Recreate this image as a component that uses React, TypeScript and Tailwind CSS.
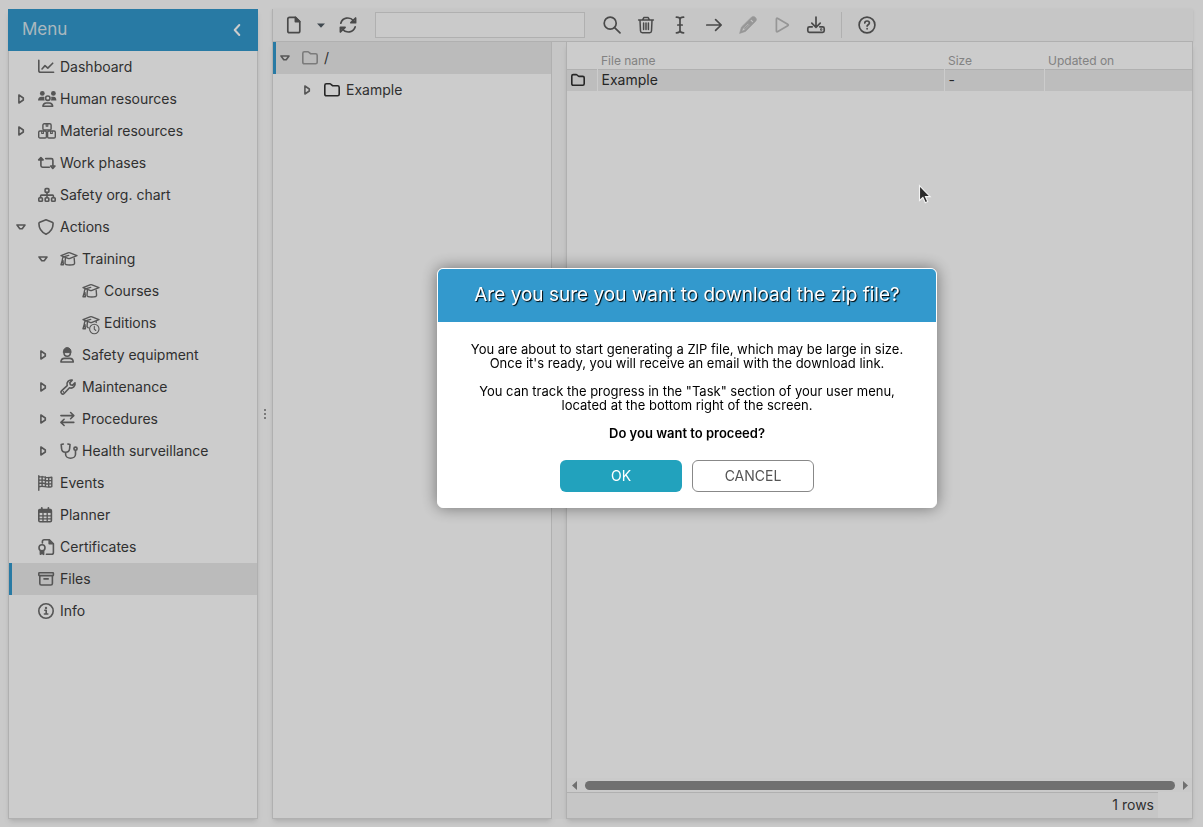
import React, { useState } from "react";
import type { ReactNode } from "react";

type IconProps = { children: ReactNode; w?: number; h?: number; sw?: number; className?: string };

function Icon({ children, w = 18, h = 16, sw = 1.6, className = "" }: IconProps) {
  return (
    <svg
      width={w}
      height={h}
      viewBox={`0 0 ${w} ${h}`}
      fill="none"
      stroke="currentColor"
      strokeWidth={sw}
      strokeLinecap="round"
      strokeLinejoin="round"
      aria-hidden="true"
      className={`shrink-0 overflow-visible ${className}`}
    >
      {children}
    </svg>
  );
}

const ChartIcon = () => (
  <Icon>
    <path d="M.8 1.2v10.3q0 1.8 1.8 1.8h13" />
    <path d="M4 10l3-3.4 2.8 2.5 4.9-4.9" />
  </Icon>
);

const PeopleIcon = () => (
  <Icon>
    <g fill="currentColor" stroke="none">
      <circle cx="4.3" cy="2.4" r="2.4" />
      <circle cx="15.4" cy="2.4" r="2.4" />
      <path d="M0 9.5C0 7 1.4 5.7 3.2 5.7h2.3c.4 0 .8.1 1 .2-.5 1.2-.3 2.6.3 3.6zM18.4 9.5c0-2.5-.9-3.8-2.7-3.8h-1.6c-.4 0-.8.1-1 .2.5 1.2.3 2.6-.3 3.6z" />
    </g>
    <circle cx="9.8" cy="7.2" r="2.2" />
    <path d="M4.9 15.2c.3-2 1.6-3.2 3.3-3.2h3.2c1.7 0 3 1.2 3.3 3.2z" />
  </Icon>
);

const BoxesIcon = () => (
  <Icon sw={1.4}>
    <rect x="4.9" y=".8" width="8.2" height="6.2" rx="1.3" />
    <rect x=".7" y="8" width="7.7" height="7" rx="1.3" />
    <rect x="9.6" y="8" width="7.7" height="7" rx="1.3" />
    <path d="M8.2 1v2.2h1.6V1M3.7 8.2v2.3h1.7V8.2M12.6 8.2v2.3h1.7V8.2" strokeWidth="1.1" />
  </Icon>
);

const PhasesIcon = () => (
  <Icon>
    <path d="M.7 4.9l2.2-2.4 2.2 2.4zM2.9 5v5.6q0 1.6 1.6 1.6h6.8M7.7 3.6h5.6q1.6 0 1.6 1.6v5.4M12.6 11l2.2 2.4L17 11z" />
  </Icon>
);

const OrgIcon = () => (
  <Icon>
    <rect x="7.1" y="1.6" width="3.8" height="3.8" rx=".9" />
    <rect x=".8" y="10.7" width="3.6" height="3.6" rx=".9" />
    <rect x="7.2" y="10.7" width="3.6" height="3.6" rx=".9" />
    <rect x="13.6" y="10.7" width="3.6" height="3.6" rx=".9" />
    <path d="M9 5.4v5.3M2.6 10.5V8.9q0-.8.8-.8h11.2q.8 0 .8.8v1.6" />
  </Icon>
);

const ShieldIcon = () => (
  <Icon>
    <path d="M8 .8l6.2 2.4q.9.4.9 1.4c0 4.8-2.5 8.6-7.1 10.7C3.4 13.2.9 9.4.9 4.6q0-1 .9-1.4z" />
  </Icon>
);

const CapPaths = () => (
  <>
    <path d="M1 4.6l7-2.8q1-.4 2 0l7 2.8-7 2.8q-1 .4-2 0z" />
    <path d="M8.7 4.4L4.2 5.7q-1.7.5-1.8 2.4l-.3 3.5M2.4 9L1 13.8h2.4l-.5-4.4" />
  </>
);

const CapIcon = () => (
  <Icon sw={1.4}>
    <CapPaths />
    <path d="M5.4 7.2l-.4 5c0 2.4 9.6 2.4 9.6 0l-.4-5" />
  </Icon>
);

const CapClockIcon = () => (
  <Icon sw={1.4}>
    <CapPaths />
    <path d="M5.4 7.2l-.4 4.6 1.2 1M14.2 6.6v1" />
    <circle cx="12.3" cy="14" r="4.7" strokeWidth="1.1" />
    <path d="M12.3 11.4v2.8l1.5 1.3" strokeWidth="1.1" />
  </Icon>
);

const HelmetIcon = () => (
  <Icon>
    <path d="M3.3 5.2C3.3 2.5 4.6.8 7.2.5c2.6.3 3.9 2 3.9 4.7z" fill="currentColor" strokeWidth="1" />
    <path d="M4 5.8c0 4.6 6.4 4.6 6.4 0M.9 15c.2-2.3 1.6-3.6 3.6-3.6h5.2c2 0 3.4 1.3 3.6 3.6z" />
  </Icon>
);

const WrenchIcon = () => (
  <Icon>
    <path d="M12.2 1.1a4.2 4.2 0 0 0-5 5.5l-5.7 5.3a1.8 1.8 0 0 0 2.6 2.6l5.4-5.7a4.2 4.2 0 0 0 5.5-5l-2.6 2.5-2-.6-.6-2z" />
    <circle cx="3.2" cy="12.9" r=".3" strokeWidth="1" />
  </Icon>
);

const ProceduresIcon = () => (
  <Icon>
    <path d="M.9 4.6h12.8M10.6 1.5l3.2 3.1-3.2 3.1M13.8 11.4H1M4.1 8.3L.9 11.4l3.2 3.1" />
  </Icon>
);

const StethoscopeIcon = () => (
  <Icon>
    <path d="M3.3 1L1.2 1.6l.4 4.2c.3 4.6 7.6 4.6 8 0l.4-4.2L7.9 1M5.6 9.3v1.9c0 5.3 9.9 5.3 9.9 0V7.6" />
    <circle cx="15.5" cy="5.7" r="1.6" />
  </Icon>
);

const FlagIcon = () => (
  <Icon sw={1.4}>
    <path d="M.8.8v14.4M.8 2.2c4.6-2 6.8 1.7 13 0v9.4c-6.2 1.9-8.4-1.8-13 .2M.8 5.4c4.6-2 6.8 1.7 13 0M.8 8.6c4.6-2 6.8 1.7 13 0M4.1 1.4v9.4M7.4 2v9.6M10.7 2.5v9.6" />
  </Icon>
);

const CalendarIcon = () => (
  <Icon>
    <rect x=".8" y="2.6" width="12.6" height="12.2" rx="1.2" />
    <path d="M1 3h12.2v2.4H1z" fill="currentColor" strokeWidth="1" />
    <path d="M3.8 1v2M10.4 1v2" strokeWidth="1.8" />
    <path d="M1 8.8h12M1 11.8h12M5 6v8.6M9.2 6v8.6" strokeWidth="1.3" />
  </Icon>
);

const CertificateIcon = () => (
  <Icon>
    <path d="M4.4 4V2.6q0-1.8 1.8-1.8h5.2l4 4v8.6q0 1.8-1.8 1.8H8.4" />
    <path d="M11.2 1v3.8h4" fill="currentColor" />
    <circle cx="4" cy="8.8" r="3" />
    <path d="M2.4 11.9v3.4L4 14.4l1.6.9v-3.4" fill="currentColor" />
  </Icon>
);

const ArchiveIcon = () => (
  <Icon>
    <rect x=".8" y="1.8" width="14.6" height="2.8" rx=".6" />
    <path d="M1.8 4.8v7.6q0 1.6 1.6 1.6h9.4q1.6 0 1.6-1.6V4.8M6 7.9h4.2" />
  </Icon>
);

const InfoIcon = () => (
  <Icon>
    <circle cx="8" cy="8" r="7.2" />
    <path d="M6.8 7.3h1.4v3.6M6.4 11h3.4" />
    <circle cx="8" cy="4.9" r=".4" fill="currentColor" />
  </Icon>
);

const FolderIcon = ({ className = "", w = 18 }: { className?: string; w?: number }) => (
  <Icon w={w} className={className}>
    {w === 18 ? (
      <path d="M.8 12.2V3.4q0-1.6 1.6-1.6h3.4q.7 0 1.2.5l1.2 1.1q.4.4 1 .4h4.4q1.6 0 1.6 1.6v6.8q0 1.6-1.6 1.6H2.4q-1.6 0-1.6-1.6z" />
    ) : (
      <path d="M.8 11.8V4q0-1.4 1.4-1.4h2.9q.6 0 1 .4l1.1 1q.4.4.9.4h3.7q1.4 0 1.4 1.4v6q0 1.4-1.4 1.4H2.2q-1.4 0-1.4-1.4z" />
    )}
  </Icon>
);

const Caret = ({ open }: { open: boolean }) => (
  <Icon w={10} h={10} sw={1.6}>
    {open ? <path d="M1 3h8L6.2 6.8H3.8z" /> : <path d="M2.9 1v8l4.4-3V4z" />}
  </Icon>
);

type Item = { label: string; level: number; icon: ReactNode; open?: boolean };

const items: Item[] = [
  { label: "Dashboard", level: 0, icon: <ChartIcon /> },
  { label: "Human resources", level: 0, icon: <PeopleIcon />, open: false },
  { label: "Material resources", level: 0, icon: <BoxesIcon />, open: false },
  { label: "Work phases", level: 0, icon: <PhasesIcon /> },
  { label: "Safety org. chart", level: 0, icon: <OrgIcon /> },
  { label: "Actions", level: 0, icon: <ShieldIcon />, open: true },
  { label: "Training", level: 1, icon: <CapIcon />, open: true },
  { label: "Courses", level: 2, icon: <CapIcon /> },
  { label: "Editions", level: 2, icon: <CapClockIcon /> },
  { label: "Safety equipment", level: 1, icon: <HelmetIcon />, open: false },
  { label: "Maintenance", level: 1, icon: <WrenchIcon />, open: false },
  { label: "Procedures", level: 1, icon: <ProceduresIcon />, open: false },
  { label: "Health surveillance", level: 1, icon: <StethoscopeIcon />, open: false },
  { label: "Events", level: 0, icon: <FlagIcon /> },
  { label: "Planner", level: 0, icon: <CalendarIcon /> },
  { label: "Certificates", level: 0, icon: <CertificateIcon /> },
  { label: "Files", level: 0, icon: <ArchiveIcon /> },
  { label: "Info", level: 0, icon: <InfoIcon /> },
];

const indents = ["pl-1", "pl-[26px]", "pl-12"];

function Sidebar() {
  const [active, setActive] = useState("Files");
  return (
    <aside className="flex w-[250px] shrink-0 flex-col bg-white shadow-md">
      <header className="flex h-[42px] shrink-0 items-center justify-between bg-[#3399cd] pr-[11px] pl-3.5">
        <h2 className="text-[17px] text-[#d6e6ef]">Menu</h2>
        <button aria-label="Collapse menu" className="flex h-6 w-5 items-center justify-center text-white">
          <Icon w={8} h={12} sw={2}>
            <path d="M6.3 1L1.7 6l4.6 5" />
          </Icon>
        </button>
      </header>
      <nav className="flex-1 border-x border-b border-[#dddddd]">
        <ul>
          {items.map((it) => (
            <li key={it.label}>
              <a
                href="#"
                onClick={() => setActive(it.label)}
                className={`flex h-8 items-center border-l-[3px] text-sm text-[#3c3c3c] ${indents[it.level]} ${
                  active === it.label ? "border-[#3399cd] bg-[#eaeaea]" : "border-transparent"
                }`}
              >
                <span className="flex w-[22px] shrink-0 text-[#6c6c6c]">
                  {it.open !== undefined && <Caret open={it.open} />}
                </span>
                <span className="mr-1 flex w-[18px] shrink-0 text-[#6c6c6c]">{it.icon}</span>
                {it.label}
              </a>
            </li>
          ))}
        </ul>
      </nav>
    </aside>
  );
}

function Tool({ label, disabled = false, children }: { label: string; disabled?: boolean; children: ReactNode }) {
  return (
    <button
      aria-label={label}
      disabled={disabled}
      className="flex h-8 w-[34px] shrink-0 items-center justify-center text-[#5c5c5c] disabled:text-[#bcbcbc]"
    >
      <Icon w={18} h={18} sw={1.7}>
        {children}
      </Icon>
    </button>
  );
}

function Toolbar() {
  return (
    <div className="flex h-[33px] shrink-0 items-center border-b border-l border-[#dddddd] bg-[#f8f8f8] pl-1 shadow-sm">
      <Tool label="New file">
        <path d="M4.6 1.3h5.8l4.4 4.4v9.2q0 1.8-1.8 1.8H4.6q-1.8 0-1.8-1.8V3.1q0-1.8 1.8-1.8z" />
        <path d="M10.4 1.4v4.2h4.2z" fill="currentColor" />
      </Tool>
      <button aria-label="New file options" className="flex h-8 w-5 items-center justify-center text-[#4f5a63]">
        <svg width="8" height="5" viewBox="0 0 8 5" fill="currentColor" aria-hidden="true">
          <path d="M0 .5h8L4 4.8z" />
        </svg>
      </button>
      <Tool label="Refresh">
        <path d="M1.8 7.2C3.4 1.6 10.6.2 14.6 4.8l1 1.2M16.6 2v4.7h-4.7zM16.2 10.8c-1.6 5.6-8.8 7-12.8 2.4l-1-1.2M1.4 16v-4.7h4.7z" />
      </Tool>
      <input
        aria-label="Search text"
        className="mr-2.5 ml-2.5 h-[26px] w-[210px] shrink-0 border border-[#dddddd] bg-[#fdfdfd] px-2 text-sm outline-none"
      />
      <Tool label="Search">
        <circle cx="7.2" cy="7.2" r="6" />
        <path d="M11.6 11.6l5.4 5.2" />
      </Tool>
      <Tool label="Delete">
        <path
          d="M1.6 4h14.8M3 4.2l.5 10.8q.1 1.7 1.8 1.7h7.4q1.7 0 1.8-1.7L15 4.2M5.6 3.8l1.2-2.2h4.4l1.2 2.2M6.6 7v6.6M9 7v6.6M11.4 7v6.6"
          strokeWidth="1.5"
        />
      </Tool>
      <Tool label="Rename">
        <path d="M5.4 1.2c2 0 3.6.6 3.6 2.3v11c0 1.7-1.6 2.3-3.6 2.3M12.6 1.2C10.6 1.2 9 1.8 9 3.5M12.6 16.8c-2 0-3.6-.6-3.6-2.3M6.8 9h4.4" />
      </Tool>
      <Tool label="Move">
        <path d="M1.8 9h14M10.6 3.6L16.2 9l-5.6 5.4" />
      </Tool>
      <Tool label="Edit" disabled>
        <path
          fillRule="evenodd"
          fill="currentColor"
          strokeWidth=".6"
          d="M12.2 1.4c1.5-1.5 3-1.2 4.2 0s1.5 2.7 0 4.2L6.5 15.4.6 17.4l1.8-6.1zM3.8 12.6l-1 2.6 2.6-.9 5.3-5.2-1.7-1.7zM11.3 4.6l2 2 1.1-1.1-2-2zM5 12.3l4.4-4.1.6.6-4.2 4.3z"
        />
      </Tool>
      <Tool label="Run" disabled>
        <path d="M3.4 3.2q0-1.7 1.5-.8l9.8 5.8q1.3.8 0 1.6l-9.8 5.8q-1.5.9-1.5-.8z" />
      </Tool>
      <Tool label="Download zip">
        <path d="M9 1v10M4.8 7.2L9 11.3l4.2-4.1M5.2 10.8H2.4q-1.6 0-1.6 1.6v2.4q0 1.6 1.6 1.6h13.2q1.6 0 1.6-1.6v-2.4q0-1.6-1.6-1.6h-2.8" />
        <circle cx="14.2" cy="13.6" r=".4" />
      </Tool>
      <div className="mx-2 h-[26px] w-px bg-[#dddddd]" />
      <Tool label="Help">
        <circle cx="9" cy="9" r="7.9" />
        <path d="M6.8 7c.1-2.7 4.6-2.6 4.6.1 0 1.6-2.3 1.6-2.3 3M9.1 12.6v.2" />
      </Tool>
    </div>
  );
}

function FileTree() {
  return (
    <section className="flex w-[280px] shrink-0 flex-col border-x border-b border-[#dddddd] bg-white text-sm text-[#3c3c3c] shadow-md">
      <button className="flex h-8 items-center border-l-[3px] border-[#3399cd] bg-[#eaeaea] pl-1 text-left">
        <span className="mr-3 text-[#6c6c6c]">
          <Caret open />
        </span>
        <FolderIcon className="mr-1 text-[#9a9a9a]" />/
      </button>
      <button className="flex h-8 items-center border-l-[3px] border-transparent pl-[26px] text-left">
        <span className="mr-3 text-[#6c6c6c]">
          <Caret open={false} />
        </span>
        <FolderIcon className="mr-1 text-[#303030]" />
        Example
      </button>
    </section>
  );
}

function FileTable() {
  return (
    <section className="flex min-w-0 flex-1 flex-col border-x border-b border-[#dddddd] bg-white shadow-md">
      <div className="flex-1">
        <table className="w-full table-fixed border-collapse text-left">
          <colgroup>
            <col className="w-[30px]" />
            <col />
            <col className="w-[100px]" />
            <col className="w-[148px]" />
          </colgroup>
          <thead>
            <tr className="h-[27px] border-b border-[#dddddd] align-bottom text-xs text-[#a3a3a3]">
              <th aria-label="Type" />
              <th className="pl-1 font-normal">File name</th>
              <th className="pl-1 font-normal">Size</th>
              <th className="pl-1 font-normal">Updated on</th>
            </tr>
          </thead>
          <tbody>
            <tr className="h-[22px] bg-[#ededed] text-sm leading-5 text-[#303030]">
              <td className="border-r border-white pl-1">
                <FolderIcon w={15} />
              </td>
              <td className="border-r border-white pl-1">Example</td>
              <td className="border-r border-white pl-1">-</td>
              <td />
            </tr>
          </tbody>
        </table>
      </div>
      <div className="flex h-[14px] items-center justify-between bg-[#fdfdfd] pr-1 pl-[5px] text-[#8c8c8c]">
        <svg width="5" height="9" viewBox="0 0 5 9" fill="currentColor" aria-hidden="true">
          <path d="M5 0v9L0 4.5z" />
        </svg>
        <div className="mr-2 ml-2 h-[9px] flex-1 rounded-full bg-[#8c8c8c]" />
        <svg width="5" height="9" viewBox="0 0 5 9" fill="currentColor" aria-hidden="true">
          <path d="M0 0v9l5-4.5z" />
        </svg>
      </div>
      <footer className="mr-[34px] flex h-[26px] items-center justify-end border-t border-[#dddddd] bg-[#f8f8f8] pr-1 pb-0.5 text-sm text-[#3c3c3c]">
        1 rows
      </footer>
    </section>
  );
}

function ConfirmDialog() {
  return (
    <div className="fixed inset-0 flex items-center justify-center bg-black/20 pb-[51px] pl-[171px]">
      <div
        role="dialog"
        aria-labelledby="confirm-title"
        className="w-[500px] overflow-hidden rounded-md border border-white bg-white text-center shadow-[0_0_16px_rgba(0,0,0,0.45)]"
      >
        <h1
          id="confirm-title"
          className="flex h-[53px] items-center justify-center bg-[#3399cd] text-[19px] text-white [text-shadow:1px_1px_1px_#000]"
        >
          Are you sure you want to download the zip file?
        </h1>
        <div className="pt-5 pb-[15px] text-[13px] leading-[14px] text-black">
          <p>
            You are about to start generating a ZIP file, which may be large in size.
            <br />
            Once it's ready, you will receive an email with the download link.
          </p>
          <p className="mt-3.5">
            You can track the progress in the "Task" section of your user menu,
            <br />
            located at the bottom right of the screen.
          </p>
          <p className="mt-3.5 font-semibold">Do you want to proceed?</p>
          <div className="mt-5 flex justify-center gap-2.5 text-sm">
            <button className="h-8 w-[122px] rounded-md bg-[#22a2bd] text-white">OK</button>
            <button className="h-8 w-[122px] rounded-md border border-[#888888] bg-white text-[#555555]">CANCEL</button>
          </div>
        </div>
      </div>
    </div>
  );
}

export default function App() {
  return (
    <div className="relative flex h-screen bg-[#fdfdfd] pt-[9px] pr-2.5 pb-2 pl-2 font-['Inter','Noto_Sans',sans-serif]">
      <Sidebar />
      <div className="flex w-3.5 shrink-0 flex-col items-center justify-center gap-0.5">
        <span className="size-0.5 bg-[#999999]" />
        <span className="size-0.5 bg-[#999999]" />
        <span className="size-0.5 bg-[#999999]" />
      </div>
      <main className="flex min-w-0 flex-1 flex-col">
        <Toolbar />
        <div className="flex min-h-0 flex-1">
          <FileTree />
          <div className="w-3.5 shrink-0 bg-[#f8f8f8]" />
          <FileTable />
        </div>
      </main>
      <ConfirmDialog />
      <svg className="absolute top-[184px] left-[918px]" width="14" height="20" viewBox="0 0 14 20" aria-hidden="true">
        <path d="M1.5 1.5v15l3.4-3 2.4 5.2 2.4-1.1-2.3-5h4.8z" fill="#2a2a2a" stroke="#f4f4f4" strokeWidth="1.1" />
      </svg>
    </div>
  );
}
